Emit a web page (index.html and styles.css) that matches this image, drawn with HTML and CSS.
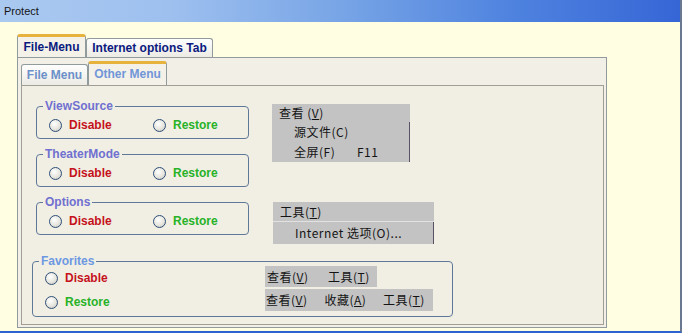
FILE: index.html
```html
<!DOCTYPE html>
<html lang="en">
<head>
    <meta charset="UTF-8">
    <meta name="viewport" content="width=device-width, initial-scale=1.0">
    <title>Protect</title>
    <link rel="stylesheet" href="styles.css">
</head>
<body>
    <div class="window">
        <div class="titlebar">Protect</div>

        <div class="tabs">
            <div class="tab-strip">
                <div class="tab tab-active outer-1">File-Menu</div>
                <div class="tab outer-2">Internet options Tab</div>
            </div>

            <div class="tab-panel">
                <!-- inner tab control -->
                <div class="tab-strip inner-strip">
                    <div class="tab inner-1">File Menu</div>
                    <div class="tab tab-active inner-2">Other Menu</div>
                </div>

                <div class="page">
                    <div class="grid">
                        <fieldset class="group">
                            <legend>ViewSource</legend>
                            <div class="choices">
                                <label class="radio"><span class="dot"></span><span class="off">Disable</span></label>
                                <label class="radio"><span class="dot"></span><span class="on">Restore</span></label>
                            </div>
                        </fieldset>

                        <div class="menu menu-view">
                            <div class="menu-head">查看 (<u>V</u>)</div>
                            <div class="menu-drop">
                                <div class="menu-item">源文件(C)</div>
                                <div class="menu-item"><span class="item-name">全屏(F)</span>F11</div>
                            </div>
                        </div>

                        <fieldset class="group">
                            <legend>TheaterMode</legend>
                            <div class="choices">
                                <label class="radio"><span class="dot"></span><span class="off">Disable</span></label>
                                <label class="radio"><span class="dot"></span><span class="on">Restore</span></label>
                            </div>
                        </fieldset>

                        <fieldset class="group">
                            <legend>Options</legend>
                            <div class="choices">
                                <label class="radio"><span class="dot"></span><span class="off">Disable</span></label>
                                <label class="radio"><span class="dot"></span><span class="on">Restore</span></label>
                            </div>
                        </fieldset>

                        <div class="menu menu-tools">
                            <div class="menu-head">工具(<u>T</u>)</div>
                            <div class="menu-drop">
                                <div class="menu-item">Internet 选项(O)...</div>
                            </div>
                        </div>

                        <!-- Favorites spans both columns -->
                        <fieldset class="group favorites">
                            <legend>Favorites</legend>
                            <div class="fav-body">
                                <div class="fav-radios">
                                    <label class="radio"><span class="dot"></span><span class="off">Disable</span></label>
                                    <label class="radio"><span class="dot"></span><span class="on">Restore</span></label>
                                </div>
                                <div class="fav-bars">
                                    <div class="menu bar bar-short">
                                        <span class="bar-item">查看(<u>V</u>)</span>
                                        <span class="bar-item">工具(<u>T</u>)</span>
                                    </div>
                                    <div class="menu bar bar-long">
                                        <span class="bar-item">查看(<u>V</u>)</span>
                                        <span class="bar-item">收藏(<u>A</u>)</span>
                                        <span class="bar-item">工具(<u>T</u>)</span>
                                    </div>
                                </div>
                            </div>
                        </fieldset>
                    </div>
                </div>
            </div>
        </div>
    </div>
</body>
</html>
```

FILE: styles.css
```css
body {
    margin: 0;
    background-color: #fff;
    font-family: "Liberation Sans", Arial, sans-serif;
}
.window {
    box-sizing: border-box;
    width: 682px;
    height: 333px;
    background-color: #fffde2;
    border-right: 2px solid #6a7890;
    border-bottom: 2px solid #2c62d2;
    overflow: hidden;
}
.titlebar {
    height: 22px;
    line-height: 22px;
    padding-left: 4px;
    font-size: 11px;
    color: #141414;
    background: linear-gradient(to right, #aac9f0 0%, #9ec0ef 25%, #78a5e6 50%, #4f83df 75%, #3666d6 100%);
}
.tabs {
    width: 590px;
    margin: 12px 0 0 17px;
}
.tab-strip {
    display: flex;
    align-items: flex-end;
    height: 23px;
}
.tab {
    box-sizing: border-box;
    height: 19px;
    line-height: 18px;
    border: 1px solid #919b9c;
    border-bottom: none;
    border-radius: 3px 3px 0 0;
    background: linear-gradient(#fefefe, #ecebe4);
    font-size: 12px;
    font-weight: bold;
    text-align: center;
    color: #0b1a7e;
}
.tab-active {
    height: 23px;
    line-height: 20px;
    border-top: 3px solid #e8b33c;
    background: #f4f2e8;
}
.outer-1 {
    width: 69px;
}
.outer-2 {
    width: 127px;
}
.tab-panel {
    border: 1px solid #919b9c;
    background-color: #f2f0e6;
    padding: 3px 2px 2px 3px;
}
.inner-strip {
    height: 24px;
}
.inner-1 {
    width: 67px;
    height: 21px;
    line-height: 20px;
    color: #6c90c9;
}
.inner-2 {
    width: 79px;
    height: 24px;
    color: #7196d8;
}
.page {
    box-sizing: border-box;
    height: 240px;
    border: 1px solid #a19e97;
    background-color: #f1efe4;
    padding: 13px 0 0 14px;
}
.grid {
    display: grid;
    grid-template-columns: 213px 162px;
    column-gap: 23px;
    row-gap: 8px;
    align-items: start;
}
.group {
    margin: 0;
    min-width: 0;
    padding: 4px 0 5px 6px;
    border: 1px solid #5f7898;
    border-radius: 4px;
}
.group legend {
    padding: 0 2px;
    font-size: 12px;
    font-weight: bold;
    line-height: 14px;
    color: #7070d0;
}
.choices {
    display: flex;
}
.radio {
    display: flex;
    align-items: center;
    height: 16px;
    margin-left: 6px;
    font-size: 12px;
    font-weight: bold;
}
.choices .radio:first-child {
    width: 104px;
}
.choices .radio + .radio {
    margin-left: 0;
}
.dot {
    box-sizing: border-box;
    width: 13px;
    height: 13px;
    margin-right: 7px;
    border: 1px solid #2e4e78;
    border-radius: 50%;
    background: radial-gradient(circle at 40% 35%, #ffffff 0%, #e6e5de 55%, #c0c0ba 100%);
}
.off {
    color: #c5121c;
}
.on {
    color: #27b227;
}
.menu {
    background-color: #c3c3c3;
    font-family: "Noto Sans CJK SC", sans-serif;
    font-size: 12px;
    letter-spacing: 0.5px;
    color: #141414;
}
.menu-view {
    grid-row: 1 / span 2;
    grid-column: 2;
    width: 138px;
    margin-top: 5px;
}
.menu-head {
    height: 18px;
    line-height: 18px;
    padding-left: 7px;
}
.menu-drop {
    border-right: 1px solid #5c5266;
}
.menu-item {
    height: 20px;
    line-height: 20px;
    padding-left: 22px;
}
.item-name {
    display: inline-block;
    width: 63px;
}
.menu-tools {
    grid-row: 3;
    grid-column: 2;
    width: 161px;
    margin: 7px 0 0 1px;
}
.menu-tools .menu-head {
    height: 19px;
    line-height: 19px;
    border-bottom: 1px solid #e2e2e2;
}
.menu-tools .menu-item {
    height: 22px;
    line-height: 22px;
}
.favorites {
    grid-column: 1 / span 2;
    box-sizing: border-box;
    width: 421px;
    margin: 2px 0 0 -4px;
    padding-top: 2px;
}
.favorites legend {
    color: #6c98e2;
}
.fav-body {
    display: flex;
}
.fav-radios {
    display: flex;
    flex-direction: column;
    gap: 8px;
    width: 226px;
}
.fav-bars {
    display: flex;
    flex-direction: column;
    gap: 2px;
    margin-top: -4px;
}
.bar {
    box-sizing: border-box;
    display: flex;
    height: 21px;
    line-height: 21px;
}
.bar-item {
    flex: none;
}
.bar-short {
    width: 112px;
    padding-left: 2px;
}
.bar-short .bar-item {
    width: 61px;
}
.bar-long {
    width: 168px;
    height: 22px;
    line-height: 22px;
    padding-left: 1px;
}
.bar-long .bar-item {
    width: 58.5px;
}
.bar .bar-item:last-child {
    width: auto;
}
```
